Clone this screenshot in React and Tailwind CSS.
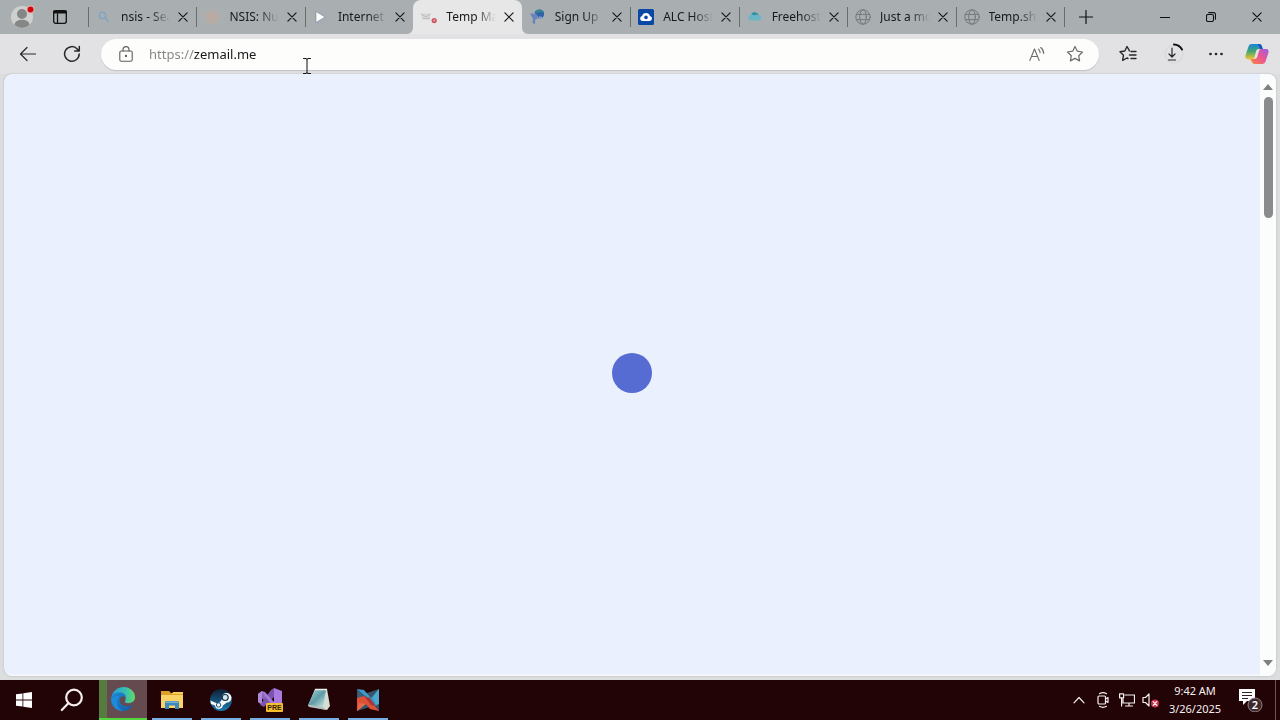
import React from "react";

const line = { fill: "none", stroke: "currentColor", strokeLinecap: "round", strokeLinejoin: "round" };

function Globe() {
  return (
    <svg viewBox="0 0 16 16" className="size-4 text-[#74797a]" {...line} strokeWidth="1">
      <circle cx="8" cy="8" r="7.2" />
      <ellipse cx="8" cy="8" rx="3.3" ry="7.2" />
      <path d="M1.4 5.4h13.2M1.4 10.6h13.2" />
    </svg>
  );
}

const favicons = {
  search: (
    <svg viewBox="0 0 16 16" className="size-4 text-[#82a5c1]" {...line} strokeWidth="1.6">
      <circle cx="6.500" cy="6.500" r="3.2" />
      <path d="M9 9l3.400 3.600" />
    </svg>
  ),
  faded: (
    <svg viewBox="0 0 16 16" className="size-4">
      <circle cx="8" cy="8" r="7" fill="#b6aca6" />
      <circle cx="8" cy="8" r="4" fill="#b8a9a1" />
    </svg>
  ),
  play: (
    <svg viewBox="0 0 16 16" className="size-4">
      <path d="M2 1h12v14H2z" fill="#a6adb4" />
      <path d="M3 2.500L12 8l-9 5.500z" fill="#fff" stroke="#7c8495" strokeWidth=".6" />
    </svg>
  ),
  mail: (
    <svg viewBox="0 0 16 16" className="size-4">
      <path d="M0 4.500h9v6H1z" fill="#d6d6d6" />
      <path d="M0 5l5 2.800 5-2.800M2 9.500h7" fill="none" stroke="#bdbebe" strokeWidth="1" />
      <circle cx="13.2" cy="11.6" r="2.6" fill="#cf5260" />
      <path d="M13.2 10.400v2" stroke="#f6dadd" strokeWidth="1" />
    </svg>
  ),
  signup: (
    <svg viewBox="0 0 16 16" className="size-4">
      <path d="M0 4.500l6 .3L8 9.500l-2.600.8L5 15l-2.500-1 .4-4.500z" fill="#6a83bd" />
      <path d="M4.500 3.500C6 0 12-.8 13.800 3c1 4-.8 7-4.800 7L7.500 7z" fill="#2f64a8" />
      <path d="M5 2.800C7.500-.5 13-.3 13.800 3.500c-2-1-5-.8-7.300.6z" fill="#36878f" />
      <path d="M8 10c2 .6 4-.5 4.600-2l-3.400-.8z" fill="#86a0cb" />
    </svg>
  ),
  alc: (
    <svg viewBox="0 0 16 16" className="size-4">
      <rect width="16" height="16" rx="1.500" fill="#0b47a5" />
      <path d="M4.600 12a2.600 2.600 0 01-.6-5.100A4.200 4.200 0 0112 6.900 2.600 2.600 0 0111.700 12z" fill="#fff" />
      <circle cx="8" cy="8.400" r="1.800" fill="#0b47a5" />
    </svg>
  ),
  cloud: (
    <svg viewBox="0 0 16 16" className="size-4">
      <path d="M3 11.500a3 3 0 01-.3-5C4 3 10 2.200 12 6c3 .3 3.500 5-.6 5.500z" fill="#6bb6c4" />
      <path d="M4.500 4.800c2-2.500 6-1.800 7 1.200L9.500 5.400 7 6.600z" fill="#318e9d" />
    </svg>
  ),
  globe: <Globe />,
};

const tabs = [
  { title: "nsis - Search", icon: "search" },
  { title: "NSIS: Nullsoft", icon: "faded" },
  { title: "Internet", icon: "play" },
  { title: "Temp Mail", icon: "mail", active: true },
  { title: "Sign Up", icon: "signup" },
  { title: "ALC Hosting", icon: "alc" },
  { title: "Freehosting", icon: "cloud" },
  { title: "Just a moment", icon: "globe" },
  { title: "Temp.sh", icon: "globe" },
];

function Cross({ className }) {
  return (
    <svg viewBox="0 0 10 10" className={className} {...line} strokeWidth="1.2">
      <path d="M.9.9l8.200 8.200M9.100.9L.9 9.100" />
    </svg>
  );
}

function Tab({ title, icon, active, plain }) {
  return (
    <div className={`relative flex min-w-0 flex-1 items-center pl-2 ${active ? "rounded-t-lg bg-[#e7e7e8]" : ""}`}>
      {!active && !plain && <span className="absolute left-0 h-5 w-px bg-[#686d6e]" />}
      {active && (
        <>
          <svg viewBox="0 0 6 6" className="absolute bottom-0 -left-1.5 size-1.5"><path d="M6 0v6H0a6 6 0 006-6z" fill="#e7e7e8" /></svg>
          <svg viewBox="0 0 6 6" className="absolute -right-1.5 bottom-0 size-1.5"><path d="M0 0v6h6a6 6 0 01-6-6z" fill="#e7e7e8" /></svg>
        </>
      )}
      <button className="flex min-w-0 flex-1 items-center gap-[9px] text-left">
        <span className="shrink-0">{favicons[icon]}</span>
        <span className="min-w-0 flex-1 overflow-hidden text-xs whitespace-nowrap text-[#17191a] [mask-image:linear-gradient(to_right,#000_60%,transparent)]">{title}</span>
      </button>
      <button aria-label={`Close ${title}`} className="flex h-6 w-[26px] shrink-0 items-center justify-center text-[#17191a]">
        <Cross className="size-2.5" />
      </button>
    </div>
  );
}

function TabBar() {
  return (
    <header className="flex h-[34px] items-stretch bg-[#a9afb1] text-[#111]">
      <button aria-label="Profile" className="flex w-11 items-center justify-center">
        <svg viewBox="0 0 26 24" className="h-6 w-[26px]">
          <circle cx="13" cy="12" r="11" fill="#cdd0cf" />
          <circle cx="13" cy="9" r="5" fill="#858786" />
          <path d="M5.500 20c0-7 15-7 15 0a11 11 0 01-15 0z" fill="#858786" />
          <circle cx="21.500" cy="4.500" r="4" fill="#e3b9b9" />
          <circle cx="21.500" cy="4.500" r="3" fill="#d2070c" />
        </svg>
      </button>
      <button aria-label="Tab actions" className="flex w-8 items-center justify-center">
        <svg viewBox="0 0 14 14" className="size-3.5" {...line} strokeWidth="1.300">
          <rect x=".7" y=".7" width="12.600" height="12.600" rx="2" />
          <path d="M1 2.600h12M1 1.500h12" strokeWidth="2" />
          <path d="M4.500 4v9" />
        </svg>
      </button>
      <nav className="ml-3 flex min-w-0 flex-1">
        {tabs.map((t, i) => (
          <Tab key={t.title} {...t} plain={i > 0 && Boolean(tabs[i - 1].active)} />
        ))}
      </nav>
      <button aria-label="New tab" className="relative flex w-11 items-center justify-center">
        <span className="absolute left-0 h-5 w-px bg-[#686d6e]" />
        <svg viewBox="0 0 14 14" className="size-3.5" {...line} strokeWidth="1.200"><path d="M7 .5v13M.5 7h13" /></svg>
      </button>
      <div className="ml-[34px] flex">
        <button aria-label="Minimize" className="flex w-[46px] items-center justify-center">
          <svg viewBox="0 0 10 10" className="size-2.5" {...line} strokeWidth="1"><path d="M0 5.500h10" /></svg>
        </button>
        <button aria-label="Restore" className="flex w-[46px] items-center justify-center">
          <svg viewBox="0 0 10 10" className="size-2.5" {...line} strokeWidth="1.100">
            <rect x=".5" y="2.500" width="7" height="7" rx="1.500" />
            <path d="M2.700.6h5A1.800 1.800 0 019.500 2.400v4.800" />
          </svg>
        </button>
        <button aria-label="Close window" className="flex w-[46px] items-center justify-center">
          <Cross className="size-2.5" />
        </button>
      </div>
    </header>
  );
}

const star = "M9 1.500l2.300 4.700 5.200.8-3.800 3.700.9 5.200L9 13.400l-4.600 2.500.9-5.200L1.500 7l5.200-.8z";

function Toolbar() {
  return (
    <div className="flex h-10 items-center bg-[#e2e2e4] text-[#27282a]">
      <button aria-label="Back" className="ml-1.5 flex w-11 items-center justify-center">
        <svg viewBox="0 0 18 16" className="h-4 w-[18px]" {...line} strokeWidth="1.200"><path d="M16.500 8h-15M8 1.500L1.500 8 8 14.500" /></svg>
      </button>
      <button aria-label="Refresh" className="flex w-11 items-center justify-center">
        <svg viewBox="0 0 18 18" className="size-[18px]" {...line} strokeWidth="1.500"><path d="M16.200 9a7.300 7.300 0 11-2-5.100L16 5.800M16.300 1.500v4.600h-4.600" /></svg>
      </button>
      <div className="ml-[7px] flex h-[31px] min-w-0 flex-1 items-center rounded-full bg-[#fdfdfc] pr-1.5 pl-[18px] shadow-[0_1px_1px_#bfc0c2]">
        <svg viewBox="0 0 14 16" className="h-4 w-3.5 shrink-0 text-[#5c5d5e]" {...line} strokeWidth="1.100">
          <rect x=".8" y="5" width="12.400" height="10.200" rx="1.500" />
          <path d="M4 5V3.600a3 3 0 016 0V5" />
          <circle cx="7" cy="10" r=".6" fill="currentColor" />
        </svg>
        <input
          type="text"
          aria-label="Address"
          defaultValue="https://zemail.me"
          className="ml-4 min-w-0 flex-1 bg-[linear-gradient(to_right,#838485_45px,#17181a_45px)] bg-clip-text text-[13px] leading-5 text-transparent caret-black outline-none"
        />
        <button aria-label="Read aloud" className="flex w-10 items-center justify-center text-[#6c6d6f]">
          <svg viewBox="0 0 16 16" className="size-4" {...line} strokeWidth="1.100"><path d="M.8 14.500L5.500 3l4.700 11.500M2.500 10.500h6M9.500 3.200a5 5 0 011.600 3.600M11.700 1.500a7.500 7.500 0 013 6" /></svg>
        </button>
        <button aria-label="Add to favorites" className="flex w-9 items-center justify-center text-[#6c6d6f]">
          <svg viewBox="0 0 18 18" className="size-[18px]" {...line} strokeWidth="1.200"><path d={star} /></svg>
        </button>
      </div>
      <button aria-label="Favorites" className="ml-[7px] flex w-11 items-center justify-center">
        <svg viewBox="0 0 18 18" className="size-[18px]" {...line} strokeWidth="1.400">
          <path d="M10.500 5.800L8 1.500 5.800 6 1 6.800l3.500 3.500-.9 5 4.400-2.300 1 .5M12 6.500h5M10.500 10h6.500M12 13.500h5" />
        </svg>
      </button>
      <button aria-label="Downloads" className="flex w-12 items-center justify-center">
        <svg viewBox="0 0 22 22" className="size-[22px]" {...line} strokeWidth="1.200">
          <circle cx="11" cy="11" r="9" stroke="#d8d8da" />
          <path d="M9 5v9M6 11l3 3 3-3M5.500 17h7" />
          <path d="M11 1.500a9.500 9.500 0 018 5" strokeWidth="2" stroke="#111" />
        </svg>
      </button>
      <button aria-label="Settings and more" className="flex w-9 items-center justify-center">
        <svg viewBox="0 0 14 4" className="h-1 w-3.5" fill="#202124"><circle cx="1.500" cy="2" r="1.300" /><circle cx="7" cy="2" r="1.300" /><circle cx="12.500" cy="2" r="1.300" /></svg>
      </button>
      <button aria-label="Copilot" className="flex w-[46px] items-center justify-center">
        <svg viewBox="0 0 24 22" className="h-[22px] w-6">
          <defs>
            <linearGradient id="cpA" x1="0" y1="0" x2="0" y2="1"><stop offset="0" stopColor="#1684d8" /><stop offset=".5" stopColor="#45a66e" /><stop offset="1" stopColor="#edc62c" /></linearGradient>
            <linearGradient id="cpB" x1="1" y1="0" x2="0" y2="1"><stop offset="0" stopColor="#9c5de4" /><stop offset=".5" stopColor="#ec5591" /><stop offset="1" stopColor="#f78443" /></linearGradient>
          </defs>
          <path d="M7 1h7c2 0 2.500 1 3 3l.6 2H14c-2 0-2.600 1-3 2.500L9.500 14c-.5 1.500-1 2-2.500 2H3c-2.500 0-3-2-2.300-4.300L3.500 3.500C4.200 1.800 5 1 7 1z" fill="url(#cpA)" />
          <path d="M17 21h-7c-2 0-2.500-1-3-3l-.6-2H9c2 0 3-1 3.400-2.500L14 8c.5-1.500 1-2 2.500-2H21c2.500 0 3 2 2.300 4.300l-2.800 8.200C19.800 20.200 19 21 17 21z" fill="url(#cpB)" />
          <path d="M13 1c2.500 0 3.500.5 4.200 3l.6 2H15.500C14 5.500 14 3 13 1z" fill="#1757c2" />
          <path d="M2 15.500C4 17 6 16 7 16l1.500 4.500C6.500 20 7 16 2 15.500z" fill="#f2912e" />
        </svg>
      </button>
    </div>
  );
}

function PageView() {
  return (
    <main className="mx-1 mb-1 flex flex-1 overflow-hidden rounded-lg bg-[#eaf0fe] shadow-[0_0_2px_#aaaeb4]">
      <div className="flex flex-1 items-center justify-center border-b-2 border-[#f4f6fc] pb-0.5">
        <div role="status" aria-label="Loading" className="size-10 rounded-full bg-[#566cd3]" />
      </div>
      <div className="flex w-4 flex-col items-center bg-[#fbfcfc] py-2.5 text-[#7e8182]">
        <svg viewBox="0 0 10 6" className="h-1.5 w-2.5"><path d="M0 6l5-6 5 6z" fill="currentColor" /></svg>
        <div className="mt-[7px] h-[121px] w-[9px] rounded-full bg-[#898b8c]" />
        <svg viewBox="0 0 10 6" className="mt-auto h-1.5 w-2.5"><path d="M0 0l5 6 5-6z" fill="currentColor" /></svg>
      </div>
    </main>
  );
}

const apps = [
  {
    name: "File Explorer",
    icon: (
      <svg viewBox="0 0 24 24" className="size-6">
        <path d="M1 3h8l2 2h12v15H1z" fill="#dba12b" />
        <path d="M1 7h22v13H1z" fill="#fad566" />
        <path d="M13 4h10v2H12z" fill="#f8cf58" />
        <path d="M5 14.500q0-1.500 1.500-1.500h11q1.500 0 1.500 1.500V21h-4v-3.500H9V21H5z" fill="#3e88bd" />
        <path d="M6 13.500h12V15H6z" fill="#76b4d2" />
      </svg>
    ),
  },
  {
    name: "Steam",
    icon: (
      <svg viewBox="0 0 24 24" className="size-6">
        <defs><linearGradient id="st" x1="0" y1="0" x2="0" y2="1"><stop offset="0" stopColor="#102035" /><stop offset="1" stopColor="#1b7bb0" /></linearGradient></defs>
        <circle cx="12" cy="12" r="11" fill="url(#st)" />
        <path d="M1.300 12.500l6.500 2.700 3-.6 2.300-3.500a4.800 4.800 0 114.800 3.500l-4 3A4 4 0 016 17.500l-4-1.500z" fill="#f6f8f8" />
        <circle cx="16.200" cy="9.500" r="3" fill="#d9e4eb" stroke="#15344e" strokeWidth="1.200" />
        <circle cx="9.600" cy="17" r="2.200" fill="none" stroke="#215376" strokeWidth="1" />
      </svg>
    ),
  },
  {
    name: "Visual Studio Preview",
    icon: (
      <svg viewBox="0 0 26 26" className="size-[26px]">
        <path d="M1 7l4-3 14 14-4 4z" fill="#8b64bd" />
        <path d="M1 7l4-3v14l-4-3z" fill="#b08ad7" />
        <path d="M17 1l8 3v16l-8 3z" fill="#a97ae0" />
        <path d="M17 1v9L7 20l-4-2L14 3z" fill="#7a54ae" />
        <path d="M4 4l4 1 9 10v6z" fill="#a37bd6" />
        <rect x="9" y="16" width="17" height="9" rx="1" fill="#f5bd30" />
        <text x="17.500" y="23.300" textAnchor="middle" fontFamily="Liberation Sans, sans-serif" fontSize="7" fontWeight="700" fill="#322208">PRE</text>
      </svg>
    ),
  },
  {
    name: "Notepad",
    icon: (
      <svg viewBox="0 0 24 24" className="size-6">
        <defs><linearGradient id="np" x1="0" y1="0" x2="1" y2="1"><stop offset="0" stopColor="#a4d4d9" /><stop offset=".5" stopColor="#5f9ca6" /><stop offset="1" stopColor="#d1e9e7" /></linearGradient></defs>
        <path d="M8 1h12l3 17-3 4L1 18z" fill="#d6ddd5" />
        <path d="M8 2h11l-3 17L1 17z" fill="url(#np)" />
        <path d="M1 17l15 2 3 3-17-3z" fill="#b5bdb8" />
        <path d="M8 1.500h12" stroke="#eef2ee" strokeWidth="1.500" />
      </svg>
    ),
  },
  {
    name: "NSIS",
    icon: (
      <svg viewBox="0 0 24 24" className="size-6">
        <path d="M1 1l10 4 12-4v22l-9-4L1 23z" fill="#36546a" />
        <path d="M1 1l7 1 7 8 8-9v15l-4 2L9 8z" fill="#3d9ac5" />
        <path d="M1 1l10 12-9-2z" fill="#3a5f7d" />
        <path d="M17 9l6-8v14l-3 2z" fill="#4ba9cf" />
        <path d="M1 10l7-2 9 8 6 7-9-2-4-5-9 7z" fill="#df5137" />
        <path d="M8 8l6 2 6 8-5-1z" fill="#a6373a" />
        <path d="M1 23l2-8 7 1z" fill="#e5694a" />
      </svg>
    ),
  },
];

function Taskbar() {
  return (
    <footer className="flex h-10 items-stretch bg-[#220306] text-[#f6efef]">
      <button aria-label="Start" className="flex w-12 items-center justify-center">
        <svg viewBox="0 0 16 16" className="size-4" fill="#fff"><path d="M0 2.300l6.500-.9v6.100H0zM7.300 1.300L16 0v7.500H7.300zM0 8.400h6.500v6.200L0 13.700zM7.300 8.400H16V16l-8.700-1.200z" /></svg>
      </button>
      <button aria-label="Search" className="flex w-12 items-center justify-center">
        <svg viewBox="0 0 24 24" className="size-6" {...line} strokeWidth="2.200"><circle cx="14" cy="9.500" r="7.800" /><path d="M8.300 15.200L1.800 22" /></svg>
      </button>
      <div className="ml-[3px] flex gap-px">
        <button aria-label="Microsoft Edge" className="flex w-12 items-center justify-center border-b-2 border-[#55d63e] bg-[linear-gradient(to_right,#557b3e_8px,#654b50_8px)]">
          <svg viewBox="0 0 24 24" className="size-6">
            <defs>
              <linearGradient id="eA" x1="0" y1="0" x2="1" y2="0"><stop offset="0" stopColor="#2997d7" /><stop offset=".6" stopColor="#38bfb3" /><stop offset="1" stopColor="#64da62" /></linearGradient>
              <linearGradient id="eB" x1="0" y1="0" x2="1" y2="1"><stop offset="0" stopColor="#1989d3" /><stop offset="1" stopColor="#165ba7" /></linearGradient>
            </defs>
            <path d="M.3 11C1.500 3.500 7 0 12.500 0 19 0 24 4.500 24 10c0 4-3 6.200-6.500 6.200-3 0-4.200-1-3.500-2 1.800-2.600.5-6.200-4-6.200-4 0-8 2-9.700 3z" fill="url(#eA)" />
            <path d="M.2 11.500C.8 7.500 5 5.500 8.500 5.500c3.500 0 6.500 2 6.500 5-1-1.800-6-2-6.300 2.500-.3 5 6.300 8.800 13.300 4.500C19.800 22 15.800 24 12 24 5 24-.5 18 .2 11.500z" fill="url(#eB)" />
            <path d="M8.700 9.700C4.500 12 5 21 12 24 5 24 0 19 .2 12 3 9 6 8.500 8.700 9.700z" fill="#1d8bd8" />
          </svg>
        </button>
        {apps.map((app) => (
          <button key={app.name} aria-label={app.name} className="flex w-12 flex-col items-center">
            <span className="flex flex-1 items-center pt-0.5">{app.icon}</span>
            <span className="h-0.5 w-10 bg-[#77afe3]" />
          </button>
        ))}
      </div>
      <div className="ml-auto flex items-stretch">
        <button aria-label="Show hidden icons" className="flex w-6 items-center justify-center">
          <svg viewBox="0 0 12 8" className="h-2 w-3" {...line} strokeWidth="1.200"><path d="M1 6.800L6 1.500l5 5.300" /></svg>
        </button>
        <button aria-label="Meet now" className="flex w-6 items-center justify-center">
          <svg viewBox="0 0 12 16" className="h-4 w-3" {...line} strokeWidth="1.200"><rect x="1" y="4" width="7.500" height="8" rx="1" /><path d="M8.500 7L11 5.500v5L8.500 9M2.500 1.700Q6-.3 9.500 1.700M2.500 14.300q3.500 2 7 0" /></svg>
        </button>
        <button aria-label="Network" className="flex w-6 items-center justify-center">
          <svg viewBox="0 0 16 14" className="h-3.5 w-4" {...line} strokeWidth="1.200"><path d="M6 2h9.500v8H4V6M10 10v3M6.500 13h7M.6.8h4v4h-4zM2.600 5v8" /></svg>
        </button>
        <button aria-label="Volume muted" className="flex w-6 items-center justify-center">
          <svg viewBox="0 0 18 16" className="h-4 w-[18px]" {...line} strokeWidth="1.200">
            <path d="M1 5.500h2.500L7 2v12l-3.500-3.500H1z" />
            <circle cx="13" cy="11.500" r="4" fill="#c9314a" stroke="none" />
            <path d="M11.200 9.700l3.600 3.600M14.800 9.700l-3.600 3.600" stroke="#fff" />
          </svg>
        </button>
        <div className="flex w-16 flex-col items-center justify-center text-[11px] leading-[18px] whitespace-nowrap">
          <time>9:42 AM</time>
          <time>3/26/2025</time>
        </div>
        <button aria-label="2 notifications" className="flex w-12 items-center justify-center pb-0.5">
          <svg viewBox="0 0 26 26" className="size-[26px]">
            <path d="M1 3h16v12h-8l-4 4v-4H1z" fill="#fff" />
            <path d="M4 6.500h10M4 9.500h10M4 12.500h6" stroke="#342024" strokeWidth="1" />
            <circle cx="17" cy="19" r="7" fill="#3c292b" stroke="#968487" strokeWidth="1" />
            <text x="17" y="23" textAnchor="middle" fontFamily="Noto Sans, sans-serif" fontSize="11" fontWeight="600" fill="#fff">2</text>
          </svg>
        </button>
        <button aria-label="Show desktop" className="w-[5px] border-l border-[#6b5557]" />
      </div>
    </footer>
  );
}

export default function App() {
  return (
    <div className="relative flex min-h-screen flex-col bg-[#dcdddf] font-['Noto_Sans','Open_Sans',sans-serif]">
      <TabBar />
      <Toolbar />
      <PageView />
      <Taskbar />
      <svg viewBox="0 0 8 16" className="pointer-events-none absolute top-[58px] left-[303px] h-4 w-2" {...line} stroke="#111" strokeWidth="1">
        <path d="M.5.5H3l1 .8 1-.8h2.500M4 1.300v13.400M.5 15.500H3l1-.8 1 .8h2.500" />
      </svg>
    </div>
  );
}
